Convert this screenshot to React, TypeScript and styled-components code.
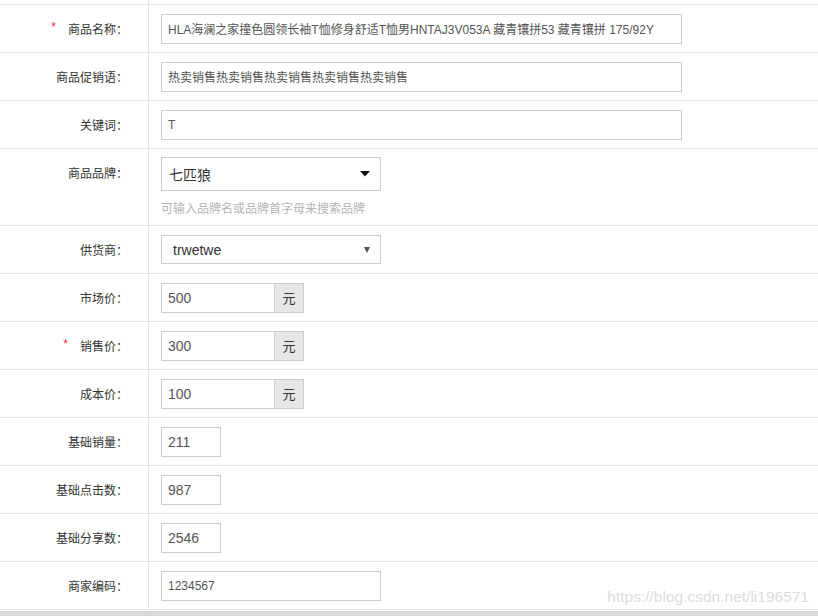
import styled, { createGlobalStyle } from 'styled-components';

const GlobalStyle = createGlobalStyle`
  html, body {
    margin: 0;
    padding: 0;
    background: #ffffff;
  }
  body {
    font-family: "Liberation Sans", "Noto Sans CJK SC", Arial, sans-serif;
  }
`;

const Page = styled.div`
  position: relative;
  height: 616px;
  overflow: hidden;
  display: flex;
  flex-direction: column;
`;

const Table = styled.div`
  display: flex;
  flex-direction: column;
`;

const Row = styled.div<{ $height?: number }>`
  display: grid;
  grid-template-columns: 149px 1fr;
  height: ${(p) => p.$height ?? 47}px;
  border-bottom: 1px solid #e5e5e5;
`;

const Label = styled.div`
  box-sizing: border-box;
  border-right: 1px solid #e5e5e5;
  padding: 2px 20px 0 0;
  text-align: right;
  font-size: 12px;
  line-height: 47px;
  color: #333333;
  white-space: nowrap;
  overflow: hidden;
`;

const Required = styled.span`
  color: #e4393c;
  margin-right: 12px;
  position: relative;
  top: -3px;
`;

const Cell = styled.div<{ $top?: boolean }>`
  display: flex;
  flex-direction: column;
  justify-content: ${(p) => (p.$top ? 'flex-start' : 'center')};
  padding: ${(p) => (p.$top ? '8px 12px 0' : '0 12px')};
`;

const TextInput = styled.input<{ $width: number; $size?: number }>`
  box-sizing: border-box;
  width: ${(p) => p.$width}px;
  height: 30px;
  padding: 0 6px;
  border: 1px solid #cccccc;
  border-radius: 0;
  outline: none;
  font-family: "Liberation Sans", "Noto Sans CJK SC", Arial, sans-serif;
  font-size: ${(p) => p.$size ?? 12}px;
  color: #555555;
  background: #ffffff;
`;

const Group = styled.div`
  display: flex;
`;

const GroupInput = styled(TextInput)`
  border-right: none;
`;

const Addon = styled.span`
  box-sizing: border-box;
  width: 30px;
  height: 30px;
  display: flex;
  align-items: center;
  justify-content: center;
  border: 1px solid #cccccc;
  background: #e6e6e6;
  font-size: 13px;
  color: #333333;
`;

const SelectBox = styled.div<{ $height: number; $padLeft: number }>`
  box-sizing: border-box;
  width: 220px;
  height: ${(p) => p.$height}px;
  border: 1px solid #cccccc;
  display: flex;
  align-items: center;
  justify-content: space-between;
  padding: 0 10px 0 ${(p) => p.$padLeft}px;
  font-size: 14px;
  color: #333333;
`;

const Hint = styled.div`
  margin-top: 8px;
  font-size: 12px;
  line-height: 20px;
  color: #b4b4b4;
`;

const Spacer = styled.div`
  flex: 1;
  background: #ffffff;
`;

const Bar = styled.div`
  height: 5px;
  background: #d9d9d9;
`;

const Watermark = styled.div`
  position: absolute;
  right: 9px;
  bottom: 10px;
  font-size: 15.5px;
  color: #dcdcdc;
  font-family: "Liberation Sans", Arial, sans-serif;
`;

const Caret = ({ big }: { big?: boolean }) =>
  big ? (
    <svg width="10" height="6" viewBox="0 0 10 6">
      <path d="M0 0 H10 L5 5.5 Z" fill="#111" />
    </svg>
  ) : (
    <svg width="6" height="7" viewBox="0 0 6 7">
      <path d="M0 1 H6 L3 7 Z" fill="#555" />
    </svg>
  );

type Field = { label: string; required?: boolean };

const FieldLabel = ({ label, required }: Field) => (
  <Label>
    {required && <Required>*</Required>}
    {label}：
  </Label>
);

const prices = [
  { label: '市场价', value: '500' },
  { label: '销售价', value: '300', required: true },
  { label: '成本价', value: '100' },
];

const counts = [
  { label: '基础销量', value: '211' },
  { label: '基础点击数', value: '987' },
  { label: '基础分享数', value: '2546' },
];

const App = () => {
  return (
    <Page>
      <GlobalStyle />
      <Table>
        <Row $height={4}>
          <Label />
          <Cell />
        </Row>
        <Row>
          <FieldLabel label="商品名称" required />
          <Cell>
            <TextInput
              $width={521}
              readOnly
              value="HLA海澜之家撞色圆领长袖T恤修身舒适T恤男HNTAJ3V053A 藏青镶拼53 藏青镶拼 175/92Y"
            />
          </Cell>
        </Row>
        <Row>
          <FieldLabel label="商品促销语" />
          <Cell>
            <TextInput $width={521} readOnly value="热卖销售热卖销售热卖销售热卖销售热卖销售" />
          </Cell>
        </Row>
        <Row>
          <FieldLabel label="关键词" />
          <Cell>
            <TextInput $width={521} readOnly value="T" />
          </Cell>
        </Row>
        <Row $height={76}>
          <FieldLabel label="商品品牌" />
          <Cell $top>
            <SelectBox $height={34} $padLeft={7}>
              <span>七匹狼</span>
              <Caret big />
            </SelectBox>
            <Hint>可输入品牌名或品牌首字母来搜索品牌</Hint>
          </Cell>
        </Row>
        <Row>
          <FieldLabel label="供货商" />
          <Cell>
            <SelectBox $height={29} $padLeft={11}>
              <span>trwetwe</span>
              <Caret />
            </SelectBox>
          </Cell>
        </Row>
        {prices.map((p) => (
          <Row key={p.label}>
            <FieldLabel label={p.label} required={p.required} />
            <Cell>
              <Group>
                <GroupInput $width={113} $size={14} readOnly value={p.value} />
                <Addon>元</Addon>
              </Group>
            </Cell>
          </Row>
        ))}
        {counts.map((c) => (
          <Row key={c.label}>
            <FieldLabel label={c.label} />
            <Cell>
              <TextInput $width={60} $size={14} readOnly value={c.value} />
            </Cell>
          </Row>
        ))}
        <Row>
          <FieldLabel label="商家编码" />
          <Cell>
            <TextInput $width={220} readOnly value="1234567" />
          </Cell>
        </Row>
      </Table>
      <Spacer />
      <Bar />
      <Watermark>https://blog.csdn.net/li196571</Watermark>
    </Page>
  );
};

export default App;
